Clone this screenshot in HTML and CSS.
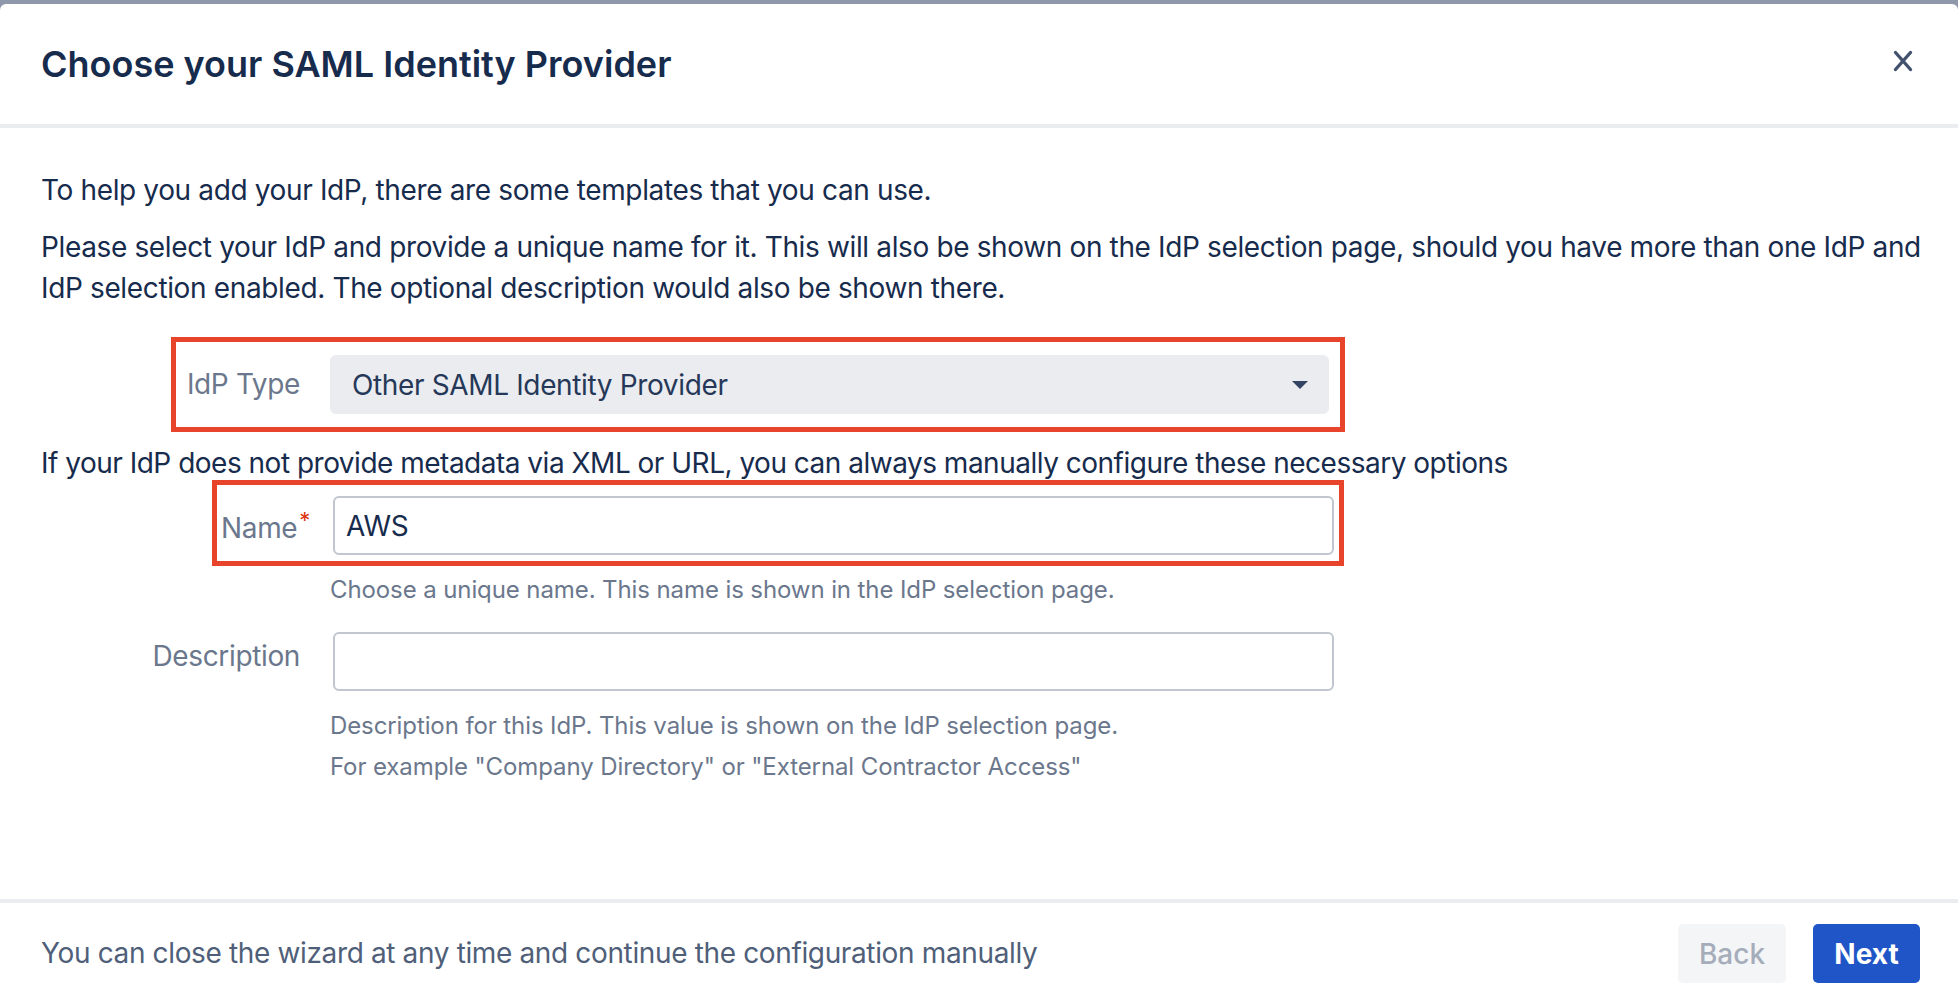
FILE: index.html
```html
<!DOCTYPE html>
<html lang="en">
<head>
<meta charset="utf-8">
<title>Choose your SAML Identity Provider</title>
<link rel="stylesheet" href="styles.css">
</head>
<body>
<div class="dialog">
  <header class="dlg-head">
    <h1 class="dlg-title">Choose your SAML Identity Provider</h1>
    <button class="close" aria-label="Close">
      <svg width="20" height="22" viewBox="0 0 20 22"><path d="M2.5 2.5 L17.5 19.5 M17.5 2.5 L2.5 19.5" stroke="#42526e" stroke-width="3.4" stroke-linecap="round" fill="none"/></svg>
    </button>
  </header>
  <main class="dlg-body">
    <p class="text">To help you add your IdP, there are some templates that you can use.</p>
    <p class="text text-gap">Please select your IdP and provide a unique name for it. This will also be shown on the IdP selection page, should you have more than one IdP and IdP selection enabled. The optional description would also be shown there.</p>
    <div class="field field-type">
      <label class="field-label label-center">IdP Type</label>
      <div class="select">
        <span>Other SAML Identity Provider</span>
        <svg class="caret" width="16" height="8" viewBox="0 0 16 8"><path d="M0 0 H16 L8 8 Z" fill="#344563"/></svg>
      </div>
      <span class="annot annot-type"></span>
    </div>
    <p class="text note">If your IdP does not provide metadata via XML or URL, you can always manually configure these necessary options</p>
    <div class="field field-name">
      <label class="field-label">Name<span class="req">*</span></label>
      <div class="control">
        <div class="input">AWS</div>
        <div class="help">Choose a unique name. This name is shown in the IdP selection page.</div>
      </div>
      <span class="annot annot-name"></span>
    </div>
    <div class="field field-desc">
      <label class="field-label">Description</label>
      <div class="control">
        <div class="input"></div>
        <div class="help">Description for this IdP. This value is shown on the IdP selection page.</div>
        <div class="help help-tight">For example "Company Directory" or "External Contractor Access"</div>
      </div>
    </div>
  </main>
  <footer class="dlg-foot">
    <span class="foot-text">You can close the wizard at any time and continue the configuration manually</span>
    <div class="actions">
      <button class="btn btn-back">Back</button>
      <button class="btn btn-next">Next</button>
    </div>
  </footer>
</div>
</body>
</html>
```
FILE: styles.css
```css
html, body {
  margin: 0;
  padding: 0;
}
body {
  background: #8f97aa;
  height: 1002px;
  overflow: hidden;
  font-family: Inter, "Noto Sans", "Liberation Sans", sans-serif;
}
.dialog {
  margin-top: 4px;
  height: 998px;
  background: #ffffff;
  border-radius: 6px 6px 0 0;
  display: flex;
  flex-direction: column;
}
.dlg-head {
  height: 120px;
  border-bottom: 4px solid #ebecf0;
  display: flex;
  align-items: center;
  justify-content: space-between;
  padding: 0 45px 0 41px;
}
.dlg-title {
  margin: 0;
  font-size: 36px;
  font-weight: 600;
  color: #172b4d;
}
.close {
  background: none;
  border: 0;
  padding: 0;
  width: 20px;
  height: 22px;
  display: flex;
  margin-top: -6px;
}
.dlg-body {
  flex: 1;
  padding: 42px 8px 0 41px;
}
.text {
  margin: 0;
  font-size: 28px;
  line-height: 41px;
  letter-spacing: -0.36px;
  color: #172b4d;
}
.text-gap {
  margin-top: 16px;
}
.note {
  margin-top: 29px;
  letter-spacing: -0.5px;
}
.field {
  position: relative;
  display: grid;
  grid-template-columns: 259px 1004px;
  column-gap: 30px;
}
.field-type {
  margin-top: 46px;
}
.field-name {
  margin-top: 12px;
}
.field-desc {
  margin-top: 22px;
}
.field-label {
  text-align: right;
  font-size: 28px;
  line-height: 41px;
  letter-spacing: -0.36px;
  color: #6b778c;
  padding-top: 4px;
}
.label-center {
  align-self: center;
  padding-top: 0;
}
.req {
  color: #de350b;
  font-size: 22px;
  vertical-align: 10px;
  margin-right: -10px;
  margin-left: 2px;
}
.select {
  width: 999px;
  height: 59px;
  box-sizing: border-box;
  background: #ebecf0;
  border-radius: 6px;
  display: flex;
  align-items: center;
  justify-content: space-between;
  padding: 0 21px 0 22px;
  font-size: 28px;
  letter-spacing: -0.36px;
  color: #253858;
}
.control {
  display: flex;
  flex-direction: column;
}
.input {
  margin-left: 3px;
  width: 1001px;
  height: 59px;
  box-sizing: border-box;
  border: 2px solid #c1c7d0;
  border-radius: 6px;
  padding: 0 11px;
  display: flex;
  align-items: center;
  font-size: 28px;
  letter-spacing: -0.3px;
  color: #172b4d;
}
.help {
  margin-top: 14px;
  font-size: 24px;
  line-height: 41px;
  letter-spacing: -0.1px;
  color: #6b778c;
}
.help-tight {
  margin-top: 0;
}
.annot {
  position: absolute;
  border: 5px solid #e8432b;
  box-sizing: border-box;
  pointer-events: none;
}
.annot-type {
  left: 130px;
  top: -18px;
  width: 1174px;
  height: 95px;
}
.annot-name {
  left: 171px;
  top: -16px;
  width: 1132px;
  height: 86px;
}
.dlg-foot {
  height: 78px;
  border-top: 4px solid #ebecf0;
  display: flex;
  align-items: flex-start;
  justify-content: space-between;
  padding: 21px 38px 0 41px;
}
.foot-text {
  font-size: 28px;
  line-height: 59px;
  letter-spacing: -0.36px;
  color: #505f79;
}
.actions {
  display: flex;
  gap: 27px;
}
.btn {
  height: 59px;
  border: 0;
  border-radius: 5px;
  font-family: inherit;
  font-size: 28px;
  padding: 0;
}
.btn-back {
  width: 108px;
  background: #f4f5f7;
  color: #a5adba;
  font-weight: 500;
}
.btn-next {
  width: 107px;
  background: #1f55c6;
  color: #ffffff;
  font-weight: 700;
}
```
